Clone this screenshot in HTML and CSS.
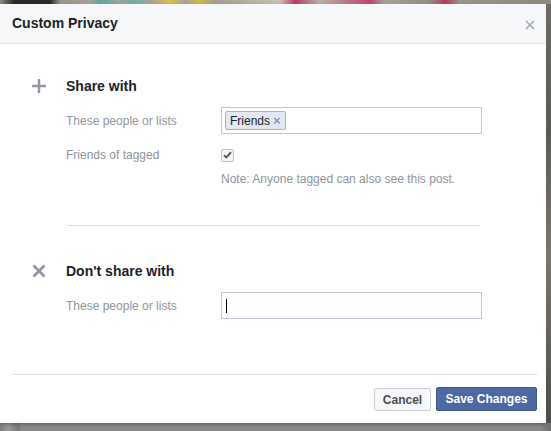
FILE: index.html
```html
<!DOCTYPE html>
<html lang="en">
<head>
    <meta charset="UTF-8">
    <title>Custom Privacy</title>
    <link rel="stylesheet" href="styles.css">
</head>
<body>
    <div class="photo-strip"></div>
    <div class="stage">
        <div class="dialog">
            <div class="dialog-header">
                <h2 class="dialog-title">Custom Privacy</h2>
                <span class="close-btn">
                    <svg width="10" height="10" viewBox="0 0 10 10"><path d="M1 1L9 9M9 1L1 9" stroke="#a5a8ad" stroke-width="1.6" fill="none"/></svg>
                </span>
            </div>

            <div class="dialog-body">
                <div class="section">
                    <div class="section-head">
                        <span class="section-icon">
                            <svg width="14" height="14" viewBox="0 0 14 14"><path d="M7 0V14M0 7H14" stroke="#9197a3" stroke-width="2.4" fill="none"/></svg>
                        </span>
                        <span class="section-title">Share with</span>
                    </div>
                    <div class="field-row">
                        <span class="field-label">These people or lists</span>
                        <div class="token-input">
                            <span class="token">Friends <span class="token-x">&times;</span></span>
                        </div>
                    </div>
                    <div class="field-row field-row-check">
                        <span class="field-label">Friends of tagged</span>
                        <span class="checkbox">
                            <svg width="9" height="8" viewBox="0 0 9 8"><path d="M1 4.2L3.3 6.4L8 1.2" stroke="#4b4f56" stroke-width="1.8" fill="none"/></svg>
                        </span>
                    </div>
                    <p class="note">Note: Anyone tagged can also see this post.</p>
                </div>

                <div class="divider"></div>

                <div class="section section-second">
                    <div class="section-head">
                        <span class="section-icon">
                            <svg width="14" height="14" viewBox="0 0 14 14"><path d="M1.5 1.5L12.5 12.5M12.5 1.5L1.5 12.5" stroke="#9197a3" stroke-width="2.8" fill="none"/></svg>
                        </span>
                        <span class="section-title">Don't share with</span>
                    </div>
                    <div class="field-row">
                        <span class="field-label">These people or lists</span>
                        <div class="token-input">
                            <span class="caret"></span>
                        </div>
                    </div>
                </div>
            </div>

            <div class="dialog-footer">
                <button class="btn btn-cancel">Cancel</button>
                <button class="btn btn-save">Save Changes</button>
            </div>
        </div>
        <div class="side-strip"></div>
    </div>
    <div class="bottom-strip"></div>
</body>
</html>
```

FILE: styles.css
```css
* {
    margin: 0;
    padding: 0;
    box-sizing: border-box;
}

body {
    font-family: "Liberation Sans", Arial, sans-serif;
    background: #8d8d8d;
    width: 551px;
    height: 431px;
    overflow: hidden;
}

.photo-strip {
    height: 4px;
    background: linear-gradient(90deg,
        #8f8a80 0px, #2b2a28 14px, #2b2a28 50px, #9a958b 60px,
        #a8a398 90px, #5fa8a0 100px, #9fa59b 120px, #6fb0a8 135px,
        #a7a295 150px, #d8c050 170px, #a9a496 185px, #d0b848 200px,
        #a39e92 215px, #b8b0a0 250px, #c8c2b5 280px, #b83c64 295px,
        #b8b2a6 320px, #c04470 370px, #a8a296 385px, #928d83 430px,
        #b0405f 445px, #9a958a 460px, #8f8a80 551px);
}

.stage {
    display: flex;
    height: 419px;
}

.dialog {
    width: 546px;
    height: 419px;
    background: #fff;
    display: flex;
    flex-direction: column;
    box-shadow: 0 2px 4px rgba(0, 0, 0, 0.25);
}

.side-strip {
    flex: 1;
    background: linear-gradient(180deg, #6c6a66 0%, #5a5955 30%, #7a776f 60%, #4c4b48 100%);
}

.bottom-strip {
    height: 8px;
    background: linear-gradient(90deg, #7e7e7e 0px, #9a9a9a 8px, #7b7b7b 18px, #8b8b8b 22px, #8b8b8b 540px, #6c6c6c 551px);
}

.dialog-header {
    height: 40px;
    background: #f6f7f9;
    border-bottom: 1px solid #e5e5e5;
    display: flex;
    align-items: center;
    justify-content: space-between;
    padding: 0 12px;
}

.dialog-title {
    font-size: 14px;
    font-weight: bold;
    color: #1d2129;
    margin-top: -2px;
}

.close-btn {
    display: flex;
    margin-top: 2px;
    margin-right: -1px;
}

.dialog-body {
    padding-left: 30px;
}

.section {
    margin-top: 33px;
}

.section-second {
    margin-top: 36px;
}

.section-head {
    display: flex;
    align-items: center;
    height: 18px;
}

.section-icon {
    width: 36px;
    display: flex;
    padding-left: 2px;
}

.section-title {
    font-size: 14px;
    font-weight: bold;
    color: #1d2129;
}

.field-row {
    display: flex;
    align-items: center;
    margin-left: 36px;
    margin-top: 12px;
}

.field-row-check {
    margin-top: 14px;
}

.field-label {
    width: 155px;
    font-size: 12px;
    color: #90949c;
}

.token-input {
    width: 261px;
    height: 27px;
    border: 1px solid #bdc7d8;
    display: flex;
    align-items: center;
    padding-left: 2px;
}

.token {
    height: 19px;
    display: flex;
    align-items: center;
    gap: 3px;
    padding: 0 4px 0 4px;
    margin-left: 1px;
    background: #e2e8f0;
    border: 1px solid #9cb4d8;
    border-radius: 2px;
    font-size: 12px;
    color: #1d2129;
}

.token-x {
    color: #8597b7;
    font-size: 13px;
    font-weight: bold;
}

.caret {
    width: 1px;
    height: 14px;
    margin-left: 2px;
    background: #000;
}

.checkbox {
    width: 13px;
    height: 13px;
    border: 1px solid #bec2c9;
    border-radius: 2px;
    background: #f5f6f7;
    display: flex;
    align-items: center;
    justify-content: center;
}

.note {
    margin: 10px 0 0 191px;
    font-size: 12px;
    line-height: 14px;
    color: #90949c;
}

.divider {
    margin: 39px 0 0 37px;
    width: 413px;
    border-top: 1px solid #dddfe2;
}

.dialog-footer {
    margin: auto 9px 0 12px;
    border-top: 1px solid #dddfe2;
    height: 49px;
    display: flex;
    justify-content: flex-end;
    align-items: flex-start;
    gap: 5px;
    padding-top: 12px;
}

.btn {
    height: 24px;
    padding: 0;
    font-family: "Liberation Sans", Arial, sans-serif;
    font-size: 12px;
    font-weight: bold;
    border-radius: 2px;
    white-space: nowrap;
}

.btn-cancel {
    width: 57px;
    margin-top: 1px;
    height: 23px;
    background: #f6f7f9;
    border: 1px solid #ced0d4;
    color: #4b4f56;
}

.btn-save {
    width: 101px;
    background: #4e69a2;
    border: 1px solid #435a8b;
    color: #fff;
}
```
